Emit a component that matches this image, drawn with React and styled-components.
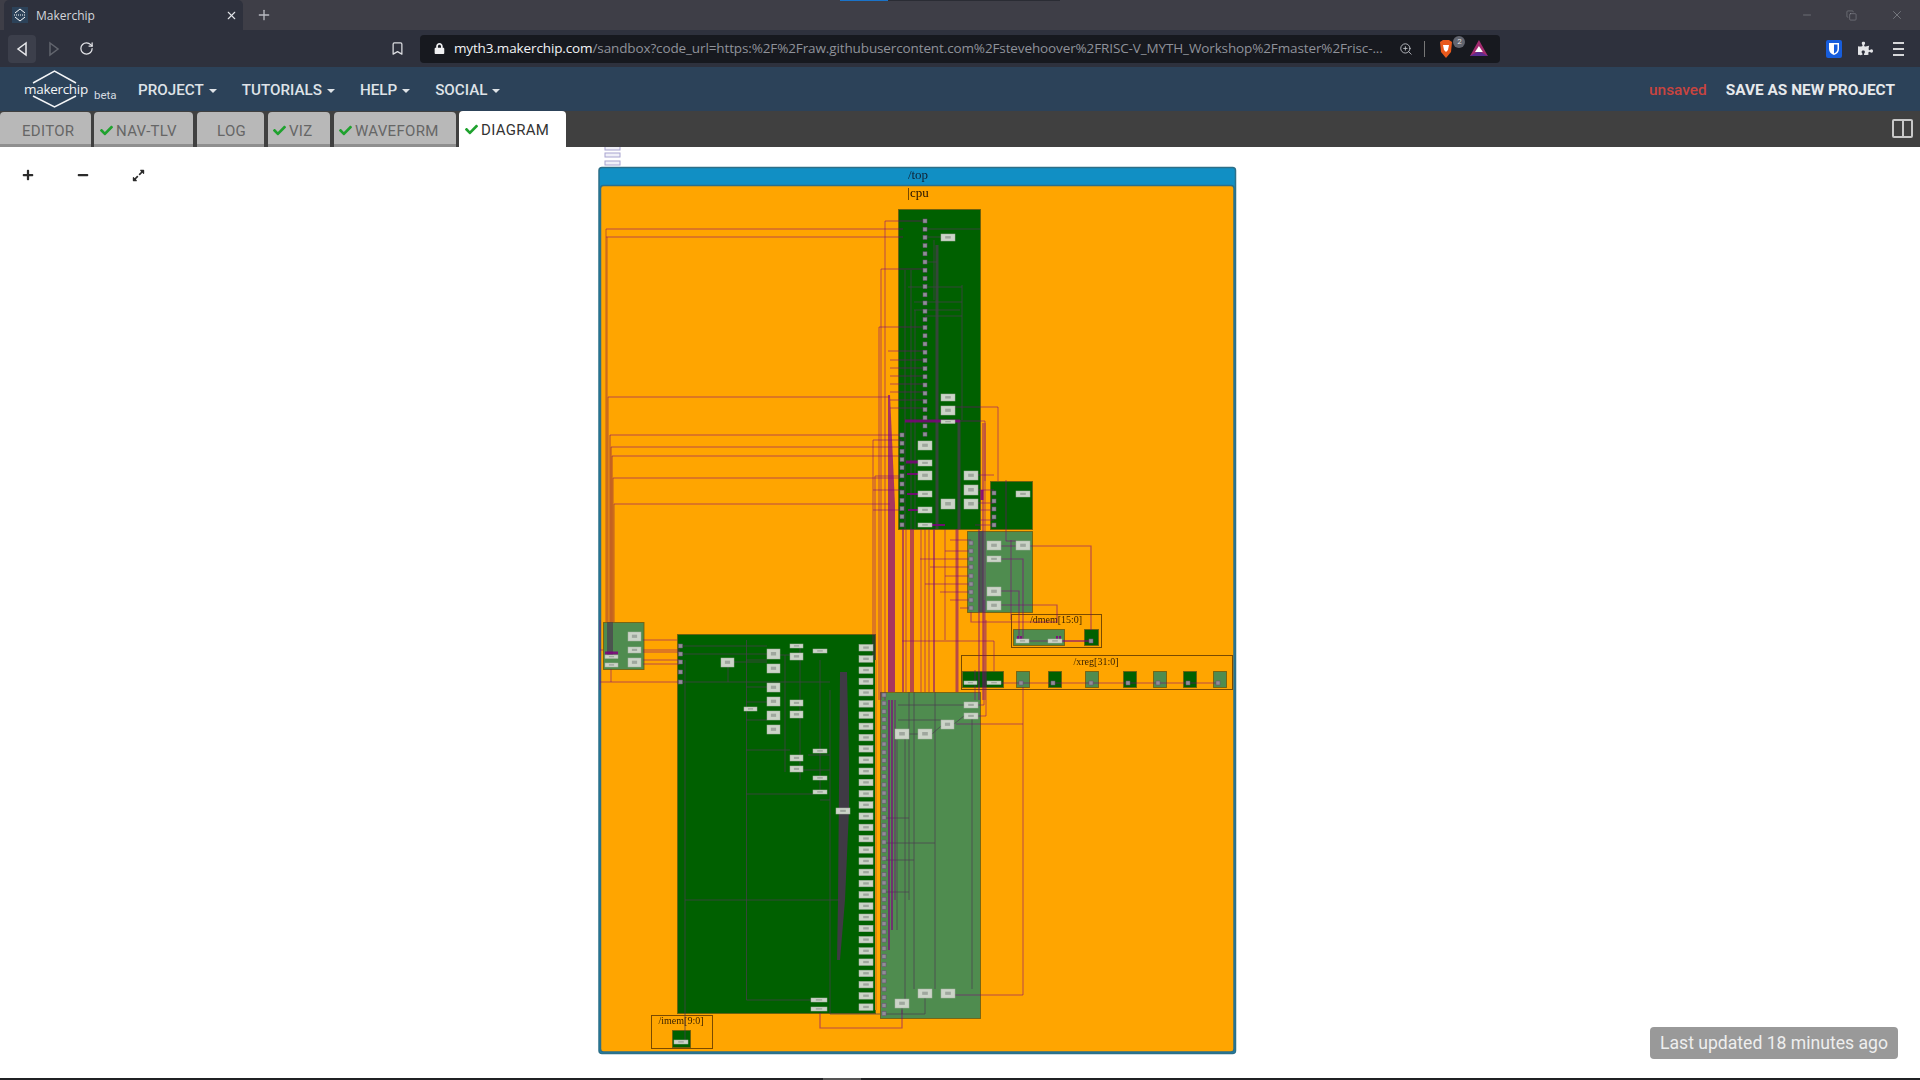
import React from "react";
import styled, { createGlobalStyle } from "styled-components";
import { FaCheck, FaPlus, FaMinus, FaExpandAlt, FaPuzzlePiece, FaLock } from "react-icons/fa";
import { Bookmark, RotateCw, ZoomIn, X, Plus, Minus, Copy } from "lucide-react";

const Global = createGlobalStyle`
  html, body { margin: 0; padding: 0; background: #fff; overflow: hidden; }
  * { box-sizing: border-box; }
  #root { width: 1920px; height: 1080px; font-family: Roboto, "Liberation Sans", sans-serif; }
`;
const Page = styled.div`width:1920px;height:1080px;display:flex;flex-direction:column;position:relative;overflow:hidden;`;
const TabStrip = styled.div`height:30px;flex:none;background:#3e3e47;display:flex;align-items:stretch;padding-left:4px;position:relative;`;
const LoadLine = styled.div`position:absolute;top:0;left:840px;width:220px;height:1px;background:linear-gradient(90deg,#1a73c9 0,#1a73c9 48px,#2a2c34 48px);`;
const BrowserTab = styled.div`width:239px;background:#2e313d;border-radius:5px 5px 0 0;display:flex;align-items:center;padding:0 5px 0 8px;color:#d3d6dc;font:12px "Open Sans",Roboto,sans-serif;`;
const Favicon = styled.div`width:16px;height:16px;background:#2c4259;display:flex;align-items:center;justify-content:center;margin-right:8px;`;
const TabClose = styled.span`margin-left:auto;display:flex;color:#e2e4e8;`;
const NewTab = styled.span`display:flex;align-items:center;margin-left:13px;color:#b9bbc2;`;
const WinButtons = styled.div`margin-left:auto;display:flex;align-items:center;gap:33px;padding-right:16px;color:#9a9ca3;`;
const Toolbar = styled.div`height:37px;flex:none;background:#2e313d;display:flex;align-items:center;position:relative;padding-left:8px;color:#e3e4e8;`;
const NavBtn = styled.div`width:28px;height:28px;border-radius:4px;display:flex;align-items:center;justify-content:center;background:${p=>p.$on?"#3c3f4b":"transparent"};margin-left:${p=>p.$ml||0}px;`;
const AddressBar = styled.div`width:1080px;height:28px;margin-left:9px;background:#17191f;border-radius:4px;display:flex;align-items:center;padding:0 12px 0 14px;`;
const Url = styled.div`width:941px;margin:-1px 0 0 9px;white-space:nowrap;overflow:hidden;font:13.5px "Open Sans",Roboto,sans-serif;letter-spacing:-.12px;color:#8f929a;b{font-weight:400;color:#f2f3f5;}`;
const Divider = styled.span`width:1px;height:16px;background:#777;margin:0 14px 0 12px;`;
const Ext = styled.div`margin-left:auto;display:flex;align-items:center;gap:16px;padding-right:15px;`;
const Badge = styled.span`position:absolute;left:14px;top:-3px;width:12px;height:12px;border-radius:6px;background:#62656f;color:#ddd;font:8px Roboto,sans-serif;display:flex;align-items:center;justify-content:center;`;
const Shield = styled.span`position:relative;display:flex;width:28px;`;
const Navbar = styled.div`height:44px;flex:none;background:#2c4259;display:flex;align-items:center;color:#dfe3e8;position:relative;`;
const Logo = styled.div`width:138px;height:44px;position:relative;flex:none;`;
const LogoText = styled.span`position:absolute;left:24px;top:13px;color:#f2f4f6;font:13.5px "Open Sans",Roboto,sans-serif;letter-spacing:-.3px;`;
const LogoBeta = styled.span`position:absolute;left:94px;top:21px;color:#d5dae0;font:11.5px Roboto,sans-serif;`;
const Menu = styled.div`font:500 15.2px Roboto,sans-serif;display:flex;align-items:center;margin:2px 25px 0 0;`;
const Caret = styled.span`margin-left:5px;margin-top:2px;border-top:4px solid currentColor;border-left:4px solid transparent;border-right:4px solid transparent;`;
const Right = styled.div`margin-left:auto;display:flex;align-items:center;padding:1px 25px 0 0;`;
const Unsaved = styled.span`color:#c9443f;font:500 15.4px Roboto,sans-serif;margin-right:19px;`;
const Save = styled.span`font:700 15.4px Roboto,sans-serif;color:#e6e9ec;`;
const TabBar = styled.div`height:36px;flex:none;background:#404040;display:flex;align-items:flex-end;position:relative;`;
const AppTab = styled.div`width:${p=>p.$w}px;height:${p=>p.$on?36:35}px;margin-right:${p=>p.$mr}px;padding:${p=>p.$on?1:5}px 0 0 ${p=>p.$pl}px;background:${p=>p.$on?"#fff":"#b8b8b8"};border-radius:4px 4px 0 0;border-bottom:${p=>p.$on?"0":"3px solid #8f8f8f"};color:${p=>p.$on?"#333":"#666"};display:flex;align-items:center;gap:3px;font:15px Roboto,sans-serif;letter-spacing:.3px;svg{color:#1fa22e;}`;
const SplitIcon = styled.div`position:absolute;right:7px;top:8px;width:21px;height:19px;border:2px solid #c8c8c8;border-radius:2px;&::after{content:"";position:absolute;left:7.5px;top:0;bottom:0;width:2px;background:#c8c8c8;}`;
const Content = styled.div`flex:1;background:#fff;position:relative;padding-left:590px;`;
const Zoomer = styled.div`position:absolute;left:22px;top:22px;display:flex;gap:43px;color:#2b2b2b;`;
const Toast = styled.div`position:absolute;right:22px;bottom:19px;width:248px;height:32px;padding-bottom:1px;background:#999;border-radius:4px;color:#eee;font:17.6px Roboto,sans-serif;display:flex;align-items:center;justify-content:center;`;
const Diagram = styled.svg`display:block;filter:blur(.35px);`;
const Bottom = styled.div`height:2px;flex:none;background:#202124;position:relative;&::after{content:"";position:absolute;left:823px;width:38px;top:0;bottom:0;background:#555;}`;

const DK="#006000", LT="#4f8c4f", EDGE="#6b5a10";
const blocks=[[898,209,82,320,DK],[990,481,42,48,DK],[967,531,65,81,LT],[677,634,198,379,DK],[880,692,100,326,LT],[603,622,40.5,47,LT],
 [1013,629,51,16,LT],[1084,629,14,16,DK],[672,1030,18,17,DK],[962,671,41,16,DK],
 [1016,671,13,16,LT],[1048,671,13,16,DK],[1085,671,13,16,LT],[1123,671,13,16,DK],[1153,671,13,16,LT],[1183,671,13,16,DK],[1213,671,13,16,LT]];
const frames=[[1011,614,90,33,"/dmem[15:0]",1056,623],[961,655,271,34,"/xreg[31:0]",1096,665],[651,1015,61,33,"/imem[9:0]",681,1024]];
const nodes=[[941,234,14,7],[941,394,14,7],[941,406,14,9],[941,420,14,3.5],[918,441,14,9],[918,460,14,6],[918,471,14,9],[918,491,14,6],[918,507,14,6],[918,523,14,4],[941,499,14,10],[964,471,14,9],[964,485,14,10],[964,499,14,10],
 [1016,491,14,6],[987,541,14,9],[1016,541,14,9],[987,556,14,6],[987,587,14,9],[987,601,14,9],[1016,639,13,4],[1048,639,14,4],[964,681,13,3.5],[987,681,14,3.5],
 [628,632,13,9],[628,647,13,6],[605,655,13,3.5],[605,663,13,4],[628,658,13,9],[721,658,13,9],
 [767,649,13,10],[767,664,13,9],[767,683,13,9],[767,697,13,9],[767,711,13,9],[767,725,13,9],
 [790,644,13,4],[790,653,13,7],[790,700,13,6],[790,711,13,7],[790,755,13,6],[790,766,13,6],
 [813,649,14,4],[813,749,14,4],[813,776,14,4],[813,790,14,4],[811,998,16,4],[811,1007,16,4],[744,707,13,4],[836,808,14,6],
 [895,729,14,10],[918,729,14,10],[941,720,13,9],[964,702,14,6],[964,713,14,6],[895,999,14,9],[918,989,14,9],[941,989,14,9],[674,1040,14,4]];
for(let i=0;i<33;i++)nodes.push([859,644.5+i*11.23,14,6.5]);
const ports=[];
for(let i=0;i<27;i++)ports.push([925,221+i*8.2]);
for(let i=0;i<12;i++)ports.push([902,435+i*8.17]);
[493,501,509,517,525].forEach(y=>ports.push([994,y]));
[543,551,559,567,576,584,592,600,608].forEach(y=>ports.push([971,y]));
[646,654,662,672,682].forEach(y=>ports.push([680.5,y]));
for(let i=0;i<40;i++)ports.push([884,695+i*8.17]);
[1021,1053,1091,1128,1158,1188,1218].forEach(x=>ports.push([x,683]));
ports.push([1091,641]);

const left=[
 ["606,229 606,622",1.2],["607,237 607,622",1.2],["608,397 608,622",1.2],["610,435 610,622",1.5],["611,447 611,622",1.5],["612,456 612,622",1.5],["613,478 613,622",1.2],["614,504 614,622",1.2],
];
const w=[
 ["606,229 903,229"],["606,237 903,237"],["608,397 890,397"],
 ["610,435 900,435"],["611,447 900,447"],["612,456 900,456"],["613,478 900,478"],["614,504 890,504"],
 ["643,640 677,640"],["643,650 680,650"],["643,652 680,652"],["643,660 680,660"],["643,664 680,664"],["600,682 680,682"],["600,650 603,650"],["600,620 600,690"],["611,669 611,682"],
 ["885,221 925,221"],["885,221 885,700"],["881,269 925,269"],["881,269 881,700"],["879,327 925,327"],["879,327 879,700"],
 ["888,351 925,351"],["890,360 925,360"],["890,368 925,368"],["890,376 925,376"],["890,384 925,384"],["890,392 925,392"],["890,400 925,400"],["890,408 925,408"],
 ["873,440 902,440"],["873,440 873,660"],["875,476 902,476"],["875,476 875,660"],["873,490 902,490"],["873,510 902,510"],
 ["903,529 903,692",2],["906,529 906,692"],["911,529 911,692",2],["913,529 913,692",2],["921,529 921,692"],["925,529 925,692"],["929,529 929,692"],["934,529 934,692",2],["945,529 945,640"],["957,529 957,692",3],["979,529 979,700",1.5],["983,423 983,700",1.5],["985,423 985,700"],
 ["955,407 998,407 998,481"],["955,421 985,421 985,481"],["978,490 994,490"],["978,475 994,475"],["978,503 994,503"],["980,510 994,510"],["980,520 994,520"],["975,525 994,525"],
 ["1011,540 1011,620"],["1030,546 1091,546 1091,630",1.2],["1001,546 1016,546"],["1006,480 1006,541 1016,541"],["1001,559 1023,559 1023,639",1.2],["1001,591 1019,591 1019,639",1.2],["1001,605 1057,605 1057,622 971,622 971,612",1.2],
 ["950,540 971,540"],["945,551 971,551"],["920,559 971,559"],["930,567 971,567"],["945,576 971,576"],["925,584 971,584"],["940,592 971,592"],["950,600 971,600"],["960,608 971,608"],
 ["1029,641 1048,641"],["1062,641 1091,641",2],["1001,683 1218,683",1.2],["902,641 994,641 994,671"],["975,670 975,700"],["1023,687 1023,995 955,995"],["956,724 1023,724"],["978,705 984,705 984,600"],["978,716 986,716 986,620"],
 ["820,1013 820,1028 902,1028 902,1010",1.2],
];
const dark=[
 ["746.5,640 746.5,1000"],["746.5,1000 811,1000"],["685,660 685,1040"],["685,900 840,900"],["830,690 830,1014"],["830,1014 880,1014"],["746,660 767,660"],["746,687 767,687"],["746,702 767,702"],
 ["780,655 790,655"],["785,655 785,772"],["800,648 800,780"],["820,660 820,790"],["728,667 728,682"],["680,682 830,682"],["680,646 767,646"],["680,654 767,654"],["734,662 767,662"],
 ["808,755 830,755"],["803,770 830,770"],["746,720 767,720"],["746,750 790,750"],["746,794 813,794"],["820,800 830,800"],
 ["884,818 909,818"],["884,843 935,843"],["884,860 914,860"],["884,892 909,892"],["914,692 914,989"],["935,692 935,989"],["972,719 972,989"],["909,692 909,900"],["897,740 897,930"],["905,739 905,999"],["902,1000 902,1014"],["925,998 925,1014 884,1014"],
 ["909,734 918,734"],["932,734 941,726"],["954,724 964,716"],["898,720 941,720"],["898,705 964,705"],
 ["925,229 980,229"],["925,237 941,237"],["905,270 905,529"],["911,270 911,529"],["915,310 915,529"],["962,285 962,420"],["908,287 962,287"],["914,310 960,310"],["914,302 962,302"],["925,316 962,316"],["925,262 937,262"],
 ["937,245 937,529",3],["959,420 959,529",3],["934,240 934,300"],["981,531 981,612",5],
 ["610,622 610,655",6],
];
const purple=[
 ["905,421 960,421",3],["906,462 918,462",3],["907,474 918,474",2],["907,494 918,494",2],["908,510 918,510",2],["932,525 945,525",2],["605,653 618,653",3],
 ["889,700 889,950",1.5],["892,700 892,930",1.5],["895,700 895,900",1],["982,490 982,500",3],
 ["1018,636 1018,639",2],["1021,636 1021,639",2],["1057,636 1057,639",2],["1060,636 1060,639",2],
];

const hatch = (x,y,wd,h)=><rect x={x+wd*.3} y={y+h*.3} width={wd*.4} height={h*.35} fill="#8b948c" opacity=".7"/>;

function Hex(){return <svg width="16" height="16" viewBox="0 0 16 16" fill="none" stroke="#fff" strokeWidth="1"><path d="M3 6 8 2l5 4M3 10l5 4 5-4"/><path d="M2 8h12" strokeDasharray="1 1"/></svg>}

export default function App(){
 return <Page>
  <Global/>
  <TabStrip>
   <LoadLine/>
   <BrowserTab><Favicon><Hex/></Favicon>Makerchip<TabClose><X size={13} strokeWidth={2}/></TabClose></BrowserTab>
   <NewTab><Plus size={16} strokeWidth={2}/></NewTab>
   <WinButtons><Minus size={12} strokeWidth={1}/><Copy size={11} strokeWidth={1}/><X size={14} strokeWidth={1}/></WinButtons>
  </TabStrip>
  <Toolbar>
   <NavBtn $on><svg width="12" height="16" viewBox="0 0 12 16" fill="none" stroke="#e8e9ec" strokeWidth="1.5"><path d="M10 2 2 8l8 6z"/></svg></NavBtn>
   <NavBtn $ml={4}><svg width="12" height="16" viewBox="0 0 12 16" fill="none" stroke="#62656e" strokeWidth="1.5"><path d="M2 2l8 6-8 6z"/></svg></NavBtn>
   <NavBtn $ml={4}><RotateCw size={15} strokeWidth={2}/></NavBtn>
   <NavBtn $ml={283}><Bookmark size={15} strokeWidth={2} color="#dcdde1"/></NavBtn>
   <AddressBar>
    <FaLock size={11} color="#f0f0f2"/>
    <Url><b>myth3.makerchip.com</b>/sandbox?code_url=https:%2F%2Fraw.githubusercontent.com%2Fstevehoover%2FRISC-V_MYTH_Workshop%2Fmaster%2Frisc-...</Url>
    <ZoomIn size={14} strokeWidth={1.5} color="#c4c6cc" style={{marginLeft:12}}/>
    <Divider/>
    <Shield>
     <svg width="14" height="20" viewBox="0 0 14 20"><path d="M1 3 4 1h6l3 2-1 10-5 6-5-6z" fill="#e8591c"/><path d="M4 6h6l-1 5-2 2-2-2z" fill="#fff"/></svg>
     <Badge>2</Badge>
    </Shield>
    <svg width="18" height="17" viewBox="0 0 18 17" style={{marginLeft:3}}><path d="M9 0 18 16H0z" fill="#a32b6f"/><path d="M0 16 9 11l9 5z" fill="#5b2d90"/><path d="M9 6l4 6H5z" fill="#fff"/></svg>
   </AddressBar>
   <Ext>
    <svg width="16" height="18" viewBox="0 0 16 18"><rect width="16" height="18" rx="2" fill="#175ddc"/><path d="M3 3h10v6c0 3-2 5-5 6-3-1-5-3-5-6z" fill="#fff"/><path d="M8 4.500h3.500V9c0 2-1.500 3.500-3.500 4.500z" fill="#175ddc"/></svg>
    <FaPuzzlePiece size={15} color="#e4e5e8"/>
    <svg width="12" height="14" viewBox="0 0 12 14" fill="#d6d7da" style={{marginLeft:4}}><rect y="0" width="11" height="2"/><rect y="6" width="11" height="2"/><rect y="12" width="11" height="2"/></svg>
   </Ext>
  </Toolbar>
  <Navbar>
   <Logo>
    <svg width="60" height="40" viewBox="0 0 60 40" style={{position:"absolute",left:28,top:3}} fill="none" stroke="#f4f5f7" strokeWidth="1.5"><path d="M5 13 26.500 1 48 13"/><path d="M5 26 26.500 37 48 26"/></svg>
    <LogoText>makerchip</LogoText>
    <LogoBeta>beta</LogoBeta>
   </Logo>
   <Menu>PROJECT<Caret/></Menu>
   <Menu>TUTORIALS<Caret/></Menu>
   <Menu>HELP<Caret/></Menu>
   <Menu>SOCIAL<Caret/></Menu>
   <Right><Unsaved>unsaved</Unsaved><Save>SAVE AS NEW PROJECT</Save></Right>
  </Navbar>
  <TabBar>
   <AppTab $w={91} $mr={3} $pl={22}>EDITOR</AppTab>
   <AppTab $w={99} $mr={4} $pl={6}><FaCheck size={13}/>NAV-TLV</AppTab>
   <AppTab $w={67} $mr={4} $pl={20}>LOG</AppTab>
   <AppTab $w={62} $mr={4} $pl={5}><FaCheck size={13}/>VIZ</AppTab>
   <AppTab $w={122} $mr={3} $pl={5}><FaCheck size={13}/>WAVEFORM</AppTab>
   <AppTab $w={107} $mr={0} $pl={6} $on><FaCheck size={13}/>DIAGRAM</AppTab>
   <SplitIcon/>
  </TabBar>
  <Content>
   <Zoomer><FaPlus size={12}/><FaMinus size={12}/><FaExpandAlt size={13}/></Zoomer>
   <Diagram width="660" height="931" viewBox="590 147 660 931">
    {[146,153,161].map(y=><g key={y}><rect x="605" y={y} width="15" height="4" fill="#f0f0f8" stroke="#a8a4d0" strokeWidth="1"/></g>)}
    <rect x="599" y="167.500" width="636.500" height="886" rx="3" fill="#118fc4" stroke="#2c6f88" strokeWidth="1.500"/>
    <rect x="600.500" y="185.500" width="633.500" height="866.500" rx="3" fill="#ffa500" stroke="#2c6f88" strokeWidth="1.500"/>
    <text x="918" y="179" textAnchor="middle" fontFamily="Liberation Serif" fontSize="13" fill="#123">/top</text>
    <text x="918" y="197" textAnchor="middle" fontFamily="Liberation Serif" fontSize="13" fill="#210">|cpu</text>
    {frames.map(([x,y,wd,h,t,tx,ty])=><g key={t}><rect x={x+.5} y={y+.5} width={wd} height={h} fill="none" stroke="#7a4a00"/><text x={tx} y={ty} textAnchor="middle" fontFamily="Liberation Serif" fontSize="10" fill="#3a2200">{t}</text></g>)}
    {blocks.map(([x,y,wd,h,f],i)=><rect key={i} x={x+.5} y={y+.5} width={wd} height={h} fill={f} stroke={EDGE} strokeOpacity=".8"/>)}
    <polygon points="840,672 847,672 849,760 849,810 845,900 840,960 837,960 838,900" fill="#3f3a44"/>
    <polygon points="888,395 890,395 895,505 895,692 888,692" fill="#a8365e"/>
    <g fill="none" stroke="#b5532a" strokeOpacity=".75">{left.map(([p,sw],i)=><polyline key={i} points={p} strokeWidth={sw||1}/>)}</g>
    <g fill="none" stroke="#800080" strokeOpacity=".55">{w.map(([p,sw],i)=><polyline key={i} points={p} strokeWidth={sw||1}/>)}</g>
    <g fill="none" stroke="#4a3d50" strokeOpacity=".7">{dark.map(([p,sw],i)=><polyline key={i} points={p} strokeWidth={sw||1}/>)}</g>
    <g fill="none" stroke="#800080" strokeOpacity=".85">{purple.map(([p,sw],i)=><polyline key={i} points={p} strokeWidth={sw||1}/>)}</g>
    <polyline points="876,660 876,1010" stroke="#e08a10" strokeWidth="2" fill="none"/>
    {ports.map(([x,y],i)=><rect key={i} x={x-2} y={y-2} width="4" height="4" fill="#8f8f96" stroke="#6c4a78" strokeWidth=".5"/>)}
    {nodes.map(([x,y,wd,h],i)=><g key={i}><rect x={x} y={y} width={wd} height={h} fill="#ccd4c8" stroke="#a8b0a4" strokeWidth=".5"/>{hatch(x,y,wd,h)}</g>)}
   </Diagram>
   <Toast>Last updated 18 minutes ago</Toast>
  </Content>
  <Bottom/>
 </Page>;
}
